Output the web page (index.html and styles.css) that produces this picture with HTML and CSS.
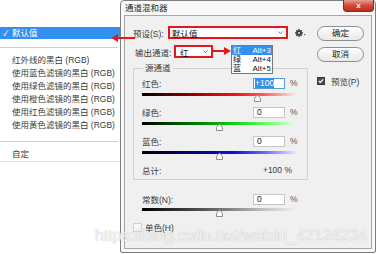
FILE: index.html
```html
<!DOCTYPE html>
<html lang="zh-CN">
<head>
    <meta charset="UTF-8">
    <title>通道混和器</title>
    <link rel="stylesheet" href="styles.css">
</head>
<body>
    <div class="screen">
        <div class="presets">
            <div class="preset current"><span class="tick">✓</span>默认值</div>
            <div class="rule"></div>
            <div class="preset">红外线的黑白 (RGB)</div>
            <div class="preset">使用蓝色滤镜的黑白 (RGB)</div>
            <div class="preset">使用绿色滤镜的黑白 (RGB)</div>
            <div class="preset">使用橙色滤镜的黑白 (RGB)</div>
            <div class="preset">使用红色滤镜的黑白 (RGB)</div>
            <div class="preset">使用黄色滤镜的黑白 (RGB)</div>
            <div class="rule low"></div>
            <div class="preset">自定</div>
        </div>

        <div class="dialog">
            <div class="titlebar">
                <span>通道混和器</span>
                <button class="close">x</button>
            </div>
            <div class="panel">
                <div class="main">
                    <div class="row-preset">
                        <span class="label">预设(S):</span>
                        <div class="select preset-box">
                            <span>默认值</span>
                            <svg width="5" height="3"><path d="M.5 .5 2.5 2.5 4.5 .5" stroke="#777" fill="none"/></svg>
                        </div>
                        <svg class="gear" width="11" height="8" viewBox="0 0 11 8">
                            <g fill="#3a3a3a">
                                <circle cx="4" cy="4" r="2.7"/>
                                <rect x="3.3" y="0" width="1.4" height="8"/>
                                <rect x="0" y="3.3" width="8" height="1.4"/>
                                <rect x="3.3" y="0" width="1.4" height="8" transform="rotate(45 4 4)"/>
                                <rect x="0" y="3.3" width="8" height="1.4" transform="rotate(45 4 4)"/>
                                <path d="M8.6 5.2h2l-1 1.2z"/>
                            </g>
                            <circle cx="4" cy="4" r="1" fill="#f0f0f0"/>
                        </svg>
                    </div>

                    <div class="row-output">
                        <span class="label">输出通道:</span>
                        <div class="select output-box">
                            <span>红</span>
                            <svg width="5" height="3"><path d="M.5 .5 2.5 2.5 4.5 .5" stroke="#777" fill="none"/></svg>
                        </div>
                    </div>

                    <div class="group">
                        <div class="legend">源通道</div>
                        <div class="channels">
                            <div class="field">
                                <span>红色:</span>
                                <span class="num focus"><span class="sel">+100</span></span>
                                <span class="pct">%</span>
                            </div>
                            <div class="slider red">
                                <svg class="thumb" style="left: 75%" viewBox="0 0 7 7"><path d="M3.5 .5C5 .5 6.5 3 6.5 5v1.5h-6V5C.5 3 2 .5 3.5 .5z" fill="#fff" stroke="#8c8c8c"/></svg>
                            </div>

                            <div class="field">
                                <span>绿色:</span>
                                <span class="num">0</span>
                                <span class="pct">%</span>
                            </div>
                            <div class="slider green">
                                <svg class="thumb" style="left: 50%" viewBox="0 0 7 7"><path d="M3.5 .5C5 .5 6.5 3 6.5 5v1.5h-6V5C.5 3 2 .5 3.5 .5z" fill="#fff" stroke="#8c8c8c"/></svg>
                            </div>

                            <div class="field">
                                <span>蓝色:</span>
                                <span class="num">0</span>
                                <span class="pct">%</span>
                            </div>
                            <div class="slider blue">
                                <svg class="thumb" style="left: 50%" viewBox="0 0 7 7"><path d="M3.5 .5C5 .5 6.5 3 6.5 5v1.5h-6V5C.5 3 2 .5 3.5 .5z" fill="#fff" stroke="#8c8c8c"/></svg>
                            </div>
                        </div>
                        <div class="total">
                            <span>总计:</span>
                            <span>+100 %</span>
                        </div>
                    </div>

                    <div class="constant">
                        <div class="field">
                            <span>常数(N):</span>
                            <span class="num">0</span>
                            <span class="pct">%</span>
                        </div>
                        <div class="slider gray">
                            <svg class="thumb" style="left: 50%" viewBox="0 0 7 7"><path d="M3.5 .5C5 .5 6.5 3 6.5 5v1.5h-6V5C.5 3 2 .5 3.5 .5z" fill="#fff" stroke="#8c8c8c"/></svg>
                        </div>
                    </div>

                    <div class="mono">
                        <span class="box"></span>
                        <span>单色(H)</span>
                    </div>
                </div>

                <div class="side">
                    <button class="btn">确定</button>
                    <button class="btn">取消</button>
                    <div class="preview">
                        <svg width="8" height="8"><rect x=".5" y=".5" width="7" height="7" fill="#4d4d4d" stroke="#3a3a3a"/><path d="M1.8 4 3.3 5.5 6.2 2.3" stroke="#fff" stroke-width="1.2" fill="none"/></svg>
                        <span>预览(P)</span>
                    </div>
                </div>
            </div>
        </div>

        <!-- callouts drawn over the screenshot -->
        <svg class="arrow arrow-preset" width="24" height="8"><path d="M6 4H24" stroke="#e31b1b" stroke-width="2"/><path d="M0 4 7 0v8z" fill="#e31b1b"/></svg>
        <svg class="arrow arrow-output" width="19" height="8"><path d="M0 4H13" stroke="#e31b1b" stroke-width="2"/><path d="M19 4 12 0v8z" fill="#e31b1b"/></svg>

        <ul class="channel-list">
            <li class="on"><span>红</span><span>Alt+3</span></li>
            <li><span>绿</span><span>Alt+4</span></li>
            <li><span>蓝</span><span>Alt+5</span></li>
        </ul>

        <div class="watermark">https://blog.csdn.net/weixin_42124234</div>
    </div>
</body>
</html>
```

FILE: styles.css
```css
* {
    box-sizing: border-box;
}
body {
    margin: 0;
    background: #fff;
    color: #3a3a3a;
    font-family: "Liberation Sans", "Noto Sans CJK SC", sans-serif;
    font-size: 8.5px;
}
.screen {
    position: relative;
    display: flex;
    width: 376px;
    height: 254px;
    overflow: hidden;
}

/* preset menu on the left */
.presets {
    width: 120px;
    padding-top: 27px;
    align-self: flex-start;
    border-bottom: 1px solid #d6e2ee;
}
.preset {
    height: 13px;
    line-height: 13px;
    padding-left: 12px;
    white-space: nowrap;
}
.preset.current {
    height: 12px;
    line-height: 12px;
    background: #3390ee;
    color: #fff;
}
.tick {
    display: inline-block;
    width: 9px;
    margin-left: -9px;
    font-size: 8px;
}
.rule {
    border-top: 1px solid #cfcfcf;
    margin: 8px 2px 6px 0;
}
.rule.low {
    margin-top: 9px;
}

/* dialog */
.dialog {
    display: flex;
    flex-direction: column;
    width: 256px;
    height: 253px;
    padding: 0 3px 3px;
    border: 1px solid #7d7d7d;
    border-radius: 4px 4px 2px 2px;
    background: #f8f8f8;
}
.titlebar {
    display: flex;
    justify-content: space-between;
    align-items: flex-start;
    height: 14px;
    padding-left: 1px;
    line-height: 14px;
    color: #1e1e1e;
}
.close {
    width: 31px;
    height: 12px;
    margin: -1px -2px 0 0;
    padding: 0;
    border: 1px solid #8a2b20;
    border-top: none;
    border-radius: 0 0 4px 4px;
    background: linear-gradient(#eaa090, #cf4a35 50%, #b8301c);
    color: #fff;
    font: bold 8px "Liberation Sans", sans-serif;
    line-height: 10px;
}
.panel {
    display: flex;
    height: 234px;
    border: 1px solid #a6a6a6;
    background: #f0f0f0;
}
.main {
    width: 192px;
    padding: 10px 0 0 8px;
}
.side {
    width: 47px;
    padding-top: 10px;
}

.row-preset, .row-output {
    display: flex;
    align-items: center;
    height: 13px;
}
.row-preset .label {
    width: 35px;
}
.row-output {
    margin-top: 6px;
    padding-left: 2px;
}
.row-output .label {
    width: 39px;
}
.select {
    display: flex;
    align-items: center;
    justify-content: space-between;
    height: 13px;
    padding: 0 3px 0 2px;
    border: 2px solid #e3171d;
    background: #fff;
    color: #111;
}
.preset-box {
    width: 120px;
}
.output-box {
    width: 39px;
    padding-left: 4px;
}
.gear {
    margin-left: 7px;
}

.group {
    width: 175px;
    margin-top: 10px;
    padding: 0 11px 3px 8px;
    border: 1px solid #d2d2d2;
}
.legend {
    display: table;
    margin: -7px 0 0 1px;
    padding: 0 2px;
    background: #f0f0f0;
    line-height: 12px;
}
.channels {
    padding-top: 3px;
}
.field {
    display: flex;
    align-items: center;
    height: 12px;
}
.num {
    width: 32px;
    height: 11px;
    margin-left: auto;
    padding-left: 3px;
    border: 1px solid #c5c5c5;
    background: #fff;
    line-height: 9px;
    color: #222;
}
.num.focus {
    padding-left: 1px;
    border-color: #5b9bd5;
}
.sel {
    background: #3390ee;
    color: #fff;
}
.pct {
    width: 6px;
    margin-left: 5px;
    color: #555;
}
.slider {
    position: relative;
    height: 3px;
    margin: 4px 0 10px;
}
.slider.red {
    background: linear-gradient(90deg, #000, #a00000 35%, #f01010 60%, #ff6060 80%, #ffe6e6);
}
.slider.green {
    background: linear-gradient(90deg, #000, #007a00 35%, #10d010 60%, #60ff60 80%, #e6ffe6);
}
.slider.blue {
    background: linear-gradient(90deg, #000, #00008a 35%, #1010e0 60%, #6a6aff 80%, #e6e6ff);
}
.slider.gray {
    background: linear-gradient(90deg, #000, #555 40%, #9a9a9a 65%, #d0d0d0 85%, #f0f0f0);
}
.thumb {
    position: absolute;
    top: 2px;
    width: 7px;
    height: 7px;
    margin-left: -3.5px;
}
.total {
    display: flex;
    justify-content: space-between;
    align-items: center;
    height: 12px;
    margin-top: 3px;
    padding-right: 4px;
}
.constant {
    width: 163px;
    margin-top: 13px;
    padding-left: 9px;
}
.constant .slider {
    margin-top: 3px;
}
.mono {
    display: flex;
    align-items: center;
    height: 12px;
    margin-top: 6px;
}
.mono .box {
    width: 9px;
    height: 9px;
    margin-right: 3px;
    border: 1px solid #cfcfcf;
    background: #f7f7f7;
}

.btn {
    display: block;
    width: 47px;
    height: 15px;
    padding: 0;
    border: 1px solid #8e8e8e;
    border-radius: 8px;
    background: linear-gradient(#fefefe, #e8e8e8);
    color: #222;
    font: 8.5px "Liberation Sans", "Noto Sans CJK SC", sans-serif;
    line-height: 13px;
}
.btn + .btn {
    margin-top: 6px;
}
.preview {
    display: flex;
    align-items: center;
    height: 9px;
    margin-top: 14px;
}
.preview span {
    margin-left: 6px;
}

/* overlays */
.arrow {
    position: absolute;
}
.arrow-preset {
    left: 111px;
    top: 34px;
}
.arrow-output {
    left: 212px;
    top: 47px;
}
.channel-list {
    position: absolute;
    left: 231px;
    top: 45px;
    width: 42px;
    margin: 0;
    padding: 0;
    list-style: none;
    border: 1px solid #777;
    background: #fff;
    font-size: 8px;
    color: #111;
}
.channel-list li {
    display: flex;
    justify-content: space-between;
    height: 9px;
    padding: 0 1px;
    line-height: 9px;
}
.channel-list li.on {
    background: #3390ee;
    color: #fff;
}
.watermark {
    position: absolute;
    left: 95px;
    top: 228px;
    font: 16px/16px "Liberation Sans", sans-serif;
    color: rgba(255, 255, 255, 0.85);
    text-shadow: 0 0 1px rgba(110, 110, 110, 0.55);
    white-space: nowrap;
}
```
